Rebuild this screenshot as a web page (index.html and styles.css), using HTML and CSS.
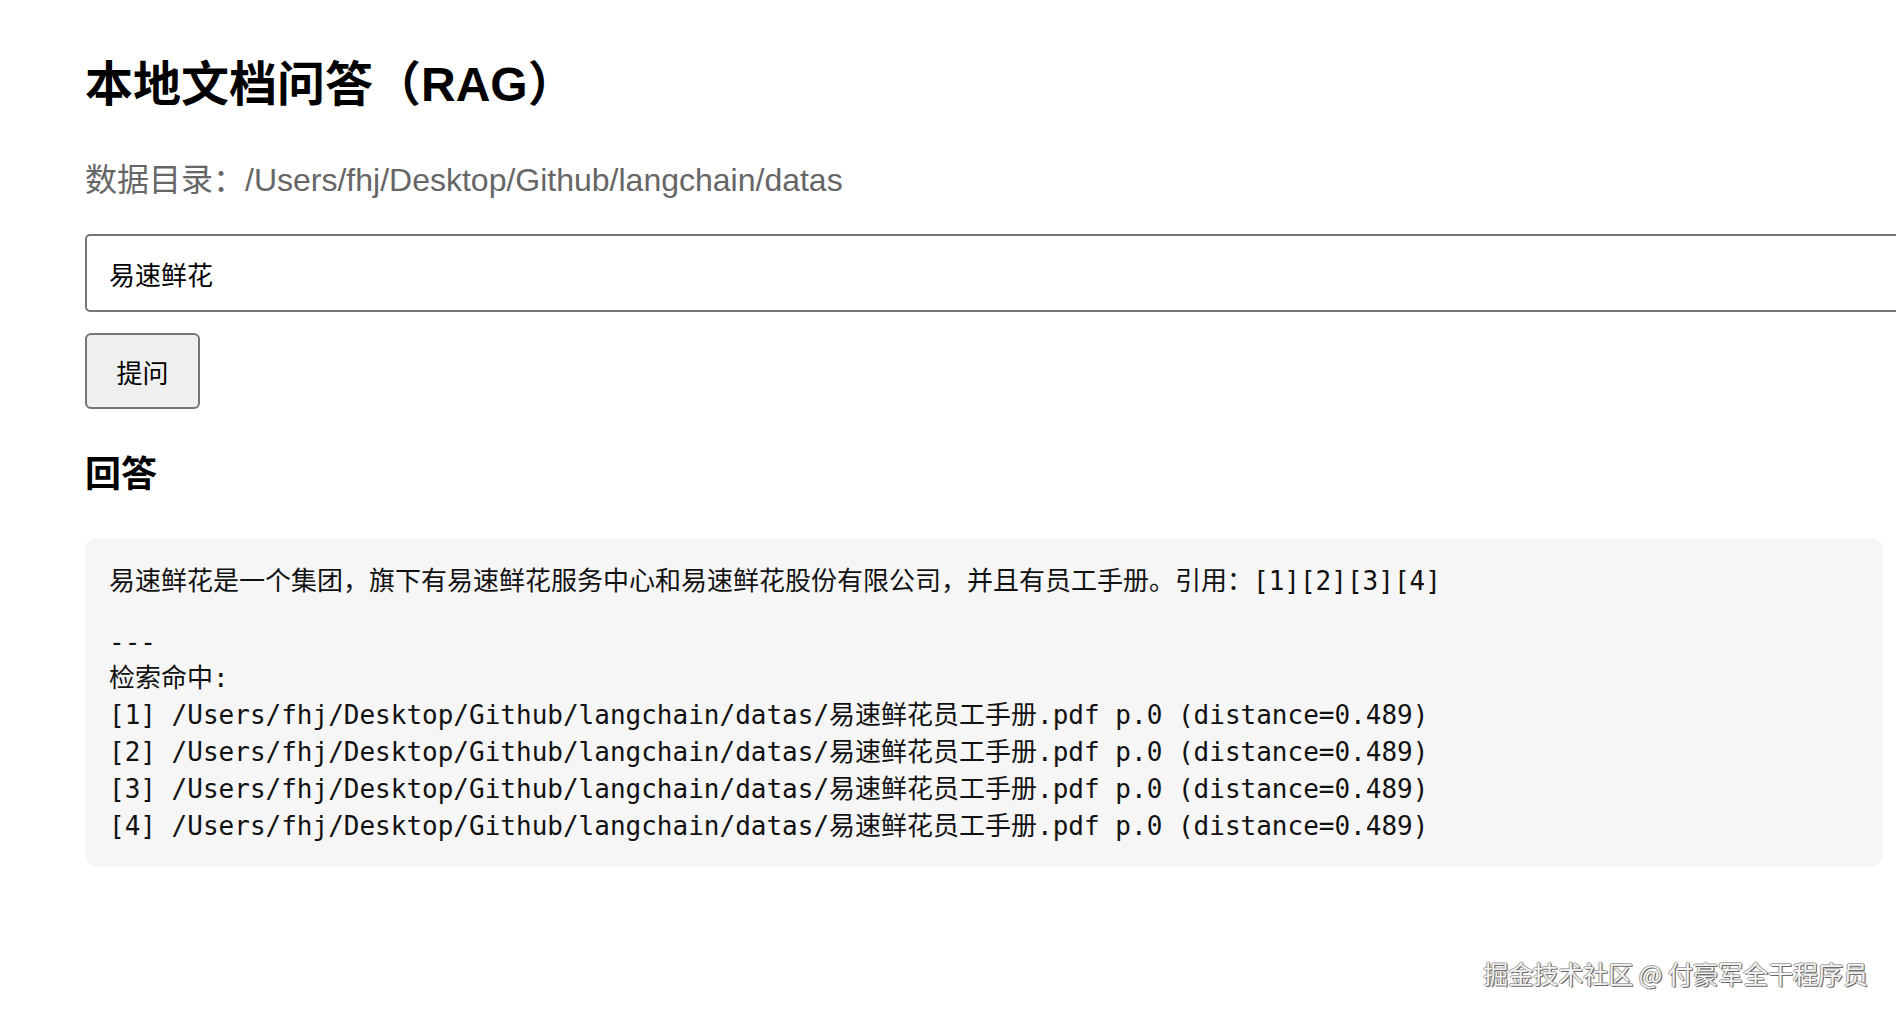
FILE: index.html
```html
<!DOCTYPE html>
<html lang="zh-CN">
<head>
<meta charset="utf-8">
<title>本地文档问答（RAG）</title>
<link rel="stylesheet" href="styles.css">
</head>
<body>
<main class="page">
  <h1 class="title">本地文档问答（RAG）</h1>
  <p class="datadir">数据目录：/Users/fhj/Desktop/Github/langchain/datas</p>
  <form class="ask">
    <input class="query" type="text" value="易速鲜花">
    <button class="submit" type="button">提问</button>
  </form>
  <h2 class="answer-title">回答</h2>
  <pre class="answer">易速鲜花是一个集团，旗下有易速鲜花服务中心和易速鲜花股份有限公司，并且有员工手册。引用：[1][2][3][4]

---
检索命中:
[1] /Users/fhj/Desktop/Github/langchain/datas/易速鲜花员工手册.pdf p.0 (distance=0.489)
[2] /Users/fhj/Desktop/Github/langchain/datas/易速鲜花员工手册.pdf p.0 (distance=0.489)
[3] /Users/fhj/Desktop/Github/langchain/datas/易速鲜花员工手册.pdf p.0 (distance=0.489)
[4] /Users/fhj/Desktop/Github/langchain/datas/易速鲜花员工手册.pdf p.0 (distance=0.489)</pre>
</main>
<div class="watermark">掘金技术社区 @ 付豪军全干程序员</div>
</body>
</html>
```
FILE: styles.css
```css
html {
  overflow: hidden;
}
body {
  margin: 0;
  background: #ffffff;
  color: #000000;
  font-family: "Liberation Sans", "Noto Sans CJK SC", sans-serif;
}
.page {
  width: 1798px;
  padding: 56px 0 0 85px;
  display: flex;
  flex-direction: column;
  align-items: flex-start;
}
.title {
  margin: 0;
  font-size: 48px;
  line-height: 58px;
  font-weight: 700;
}
.datadir {
  margin: 46px 0 0;
  font-size: 32px;
  line-height: 40px;
  color: #666666;
}
.ask {
  margin: 34px 0 0;
  width: 100%;
  display: flex;
  flex-direction: column;
  align-items: flex-start;
}
.query {
  box-sizing: content-box;
  width: 100%;
  height: 74px;
  padding: 0 22px;
  margin: 0;
  border: 2px solid #767676;
  border-radius: 5px;
  background: #ffffff;
  font-family: "Liberation Sans", "Noto Sans CJK SC", sans-serif;
  font-size: 26px;
  color: #000000;
  flex: none;
}
.submit {
  margin: 21px 0 0;
  box-sizing: border-box;
  width: 115px;
  height: 76px;
  padding: 0;
  border: 2px solid #767676;
  border-radius: 6px;
  background: #efefef;
  font-family: "Liberation Sans", "Noto Sans CJK SC", sans-serif;
  font-size: 26px;
  color: #000000;
}
.answer-title {
  margin: 44px 0 0;
  font-size: 36px;
  line-height: 44px;
  font-weight: 700;
}
.answer {
  box-sizing: border-box;
  width: 100%;
  margin: 41px 0 0;
  padding: 22px 24px 25px;
  background: #f6f6f6;
  border-radius: 12px;
  font-family: "DejaVu Sans Mono", "Noto Sans CJK SC", monospace;
  font-size: 26px;
  line-height: normal;
  color: #111111;
  white-space: pre-wrap;
}
.watermark {
  position: absolute;
  right: 28px;
  bottom: 24px;
  font-family: "Noto Sans CJK SC", sans-serif;
  font-size: 25px;
  line-height: 34px;
  color: #f4f4f4;
  text-shadow: 1px 1px 0 #6a6a6a, -1px 0 0 #9a9a9a, 0 -1px 0 #a8a8a8, 1px 0 1px #777777;
}
```
